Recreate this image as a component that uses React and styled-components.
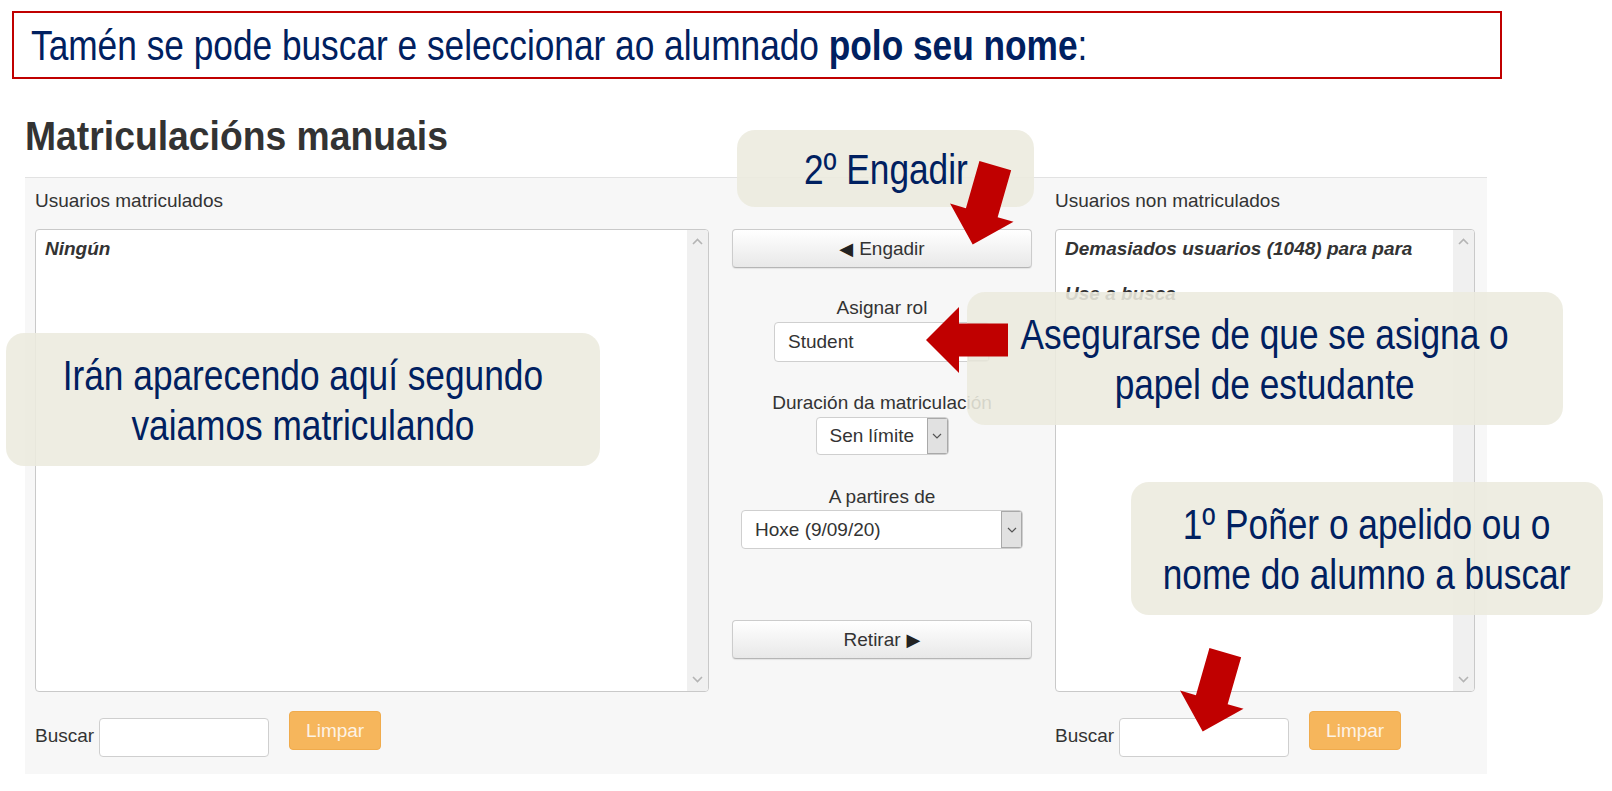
import React from 'react';
import styled, { createGlobalStyle } from 'styled-components';

const GlobalStyle = createGlobalStyle`
  html, body {
    margin: 0;
    padding: 0;
    background: #fff;
  }
  body {
    font-family: "Liberation Sans", Arial, sans-serif;
  }
`;

// no Arial Narrow in the sandbox, so squeeze Liberation Sans to the same width
const Narrow = styled.span`
  display: inline-block;
  white-space: nowrap;
  transform: scaleX(0.82);
  transform-origin: ${(p) => p.$origin || 'center'};
`;

const Page = styled.div`
  position: relative;
  width: 1612px;
  height: 791px;
  overflow: hidden;
  background: #fff;
`;

const Banner = styled.div`
  margin: 11px 0 0 12px;
  width: 1490px;
  height: 68px;
  box-sizing: border-box;
  border: 2px solid #c00000;
  padding-left: 17px;
  display: flex;
  align-items: center;
  font-size: 43px;
  color: #002060;
  white-space: nowrap;

  b {
    font-weight: bold;
  }
`;

const Content = styled.div`
  padding-left: 25px;
`;

const Heading = styled.h2`
  margin: 35px 0 19px;
  font-size: 41px;
  line-height: 44px;
  font-weight: bold;
  color: #333;
  white-space: nowrap;
  transform: scaleX(0.91);
  transform-origin: left;
`;

const Panel = styled.div`
  width: 1462px;
  height: 597px;
  box-sizing: border-box;
  background: #f7f7f7;
  border-top: 1px solid #e2e2e2;
  padding: 11px 12px 0 10px;
  display: grid;
  grid-template-columns: 674px 300px 420px;
  grid-template-rows: auto auto auto;
  align-content: start;
  column-gap: 23px;
  align-items: start;
  font-size: 19px;
  color: #333;
`;

const ListLabel = styled.div`
  line-height: 24px;
  margin-bottom: 16px;
  grid-column: ${(p) => p.$col};
  grid-row: 1;
`;

const ListBox = styled.div`
  grid-column: ${(p) => p.$col};
  grid-row: 2;
  height: 463px;
  box-sizing: border-box;
  background: #fff;
  border: 1px solid #c9c9c9;
  border-radius: 4px;
  display: flex;
  overflow: hidden;
`;

const ListItems = styled.div`
  flex: 1;
  padding: 7px 9px;
`;

const ListItem = styled.div`
  font-weight: bold;
  font-style: italic;
  line-height: 24px;
  margin-bottom: 21px;
  color: #333;
`;

const ScrollTrack = styled.div`
  width: 21px;
  background: #f0f0f0;
  display: flex;
  flex-direction: column;
  justify-content: space-between;
  align-items: center;
  padding: 8px 0;
`;

const Chevron = ({ down }) => (
  <svg width="11" height="7" viewBox="0 0 11 7">
    <path
      d={down ? 'M1 1 L5.5 5.5 L10 1' : 'M1 6 L5.5 1.5 L10 6'}
      fill="none"
      stroke="#b4b4b4"
      strokeWidth="1.6"
    />
  </svg>
);

const Scrollbar = () => (
  <ScrollTrack>
    <Chevron />
    <Chevron down />
  </ScrollTrack>
);

const Middle = styled.div`
  grid-column: 2;
  grid-row: 2;
  display: flex;
  flex-direction: column;
  align-items: center;
`;

const Button = styled.div`
  width: 100%;
  height: 39px;
  box-sizing: border-box;
  margin-top: ${(p) => p.$top || 0}px;
  display: flex;
  align-items: center;
  justify-content: center;
  gap: 6px;
  background: linear-gradient(#ffffff, #e8e8e8);
  border: 1px solid #cccccc;
  border-bottom-color: #b5b5b5;
  border-radius: 4px;
  box-shadow: 0 1px 1px rgba(0, 0, 0, 0.08);
  color: #333;
`;

const Tri = styled.span`
  font-family: "DejaVu Sans", sans-serif;
  font-size: 18px;
  line-height: 1;
  color: #222;
`;

const FieldLabel = styled.div`
  line-height: 24px;
  margin-top: ${(p) => p.$top}px;
  text-align: center;
  white-space: nowrap;
`;

const Select = styled.div`
  width: ${(p) => p.$width}px;
  height: ${(p) => p.$height}px;
  margin-top: ${(p) => p.$top}px;
  box-sizing: border-box;
  display: flex;
  align-items: stretch;
  background: #fff;
  border: 1px solid #cfcfcf;
  border-radius: 4px;
  overflow: hidden;
`;

const SelectValue = styled.div`
  flex: 1;
  display: flex;
  align-items: center;
  padding-left: 13px;
  white-space: nowrap;
`;

const SelectArrow = styled.div`
  width: 21px;
  box-sizing: border-box;
  background: #e1e1e1;
  border: 1px solid #a9a9a9;
  display: flex;
  align-items: center;
  justify-content: center;
`;

const SmallChevron = () => (
  <svg width="10" height="6" viewBox="0 0 10 6">
    <path d="M1 1 L5 5 L9 1" fill="none" stroke="#555" strokeWidth="1.2" />
  </svg>
);

const SearchRow = styled.div`
  grid-column: ${(p) => p.$col};
  grid-row: 3;
  margin-top: 19px;
  display: flex;
  align-items: flex-start;
`;

const SearchLabel = styled.div`
  line-height: 39px;
  margin-top: 5px;
`;

const SearchInput = styled.div`
  width: 170px;
  height: 39px;
  box-sizing: border-box;
  margin: 7px 0 0 5px;
  background: #fff;
  border: 1px solid #cfcfcf;
  border-radius: 4px;
`;

const ClearButton = styled.div`
  width: 92px;
  height: 39px;
  box-sizing: border-box;
  margin-left: 20px;
  display: flex;
  align-items: center;
  justify-content: center;
  background: #f6b65c;
  border: 1px solid #f0ab4c;
  border-radius: 4px;
  color: #fdf3e6;
`;

const Callout = styled.div`
  position: absolute;
  left: ${(p) => p.$x}px;
  top: ${(p) => p.$y}px;
  width: ${(p) => p.$w}px;
  height: ${(p) => p.$h}px;
  box-sizing: border-box;
  display: flex;
  align-items: center;
  justify-content: center;
  text-align: center;
  background: rgba(236, 234, 222, 0.88);
  border-radius: 18px;
  font-size: 43px;
  line-height: 50px;
  color: #002060;
`;

const ArrowSvg = styled.svg`
  position: absolute;
  left: ${(p) => p.$cx - 50}px;
  top: ${(p) => p.$cy - 50}px;
  overflow: visible;
`;

const Arrow = ({ cx, cy, angle }) => (
  <ArrowSvg $cx={cx} $cy={cy} width="100" height="100" viewBox="-50 -50 100 100">
    <path
      d="M -16.5 -41 L 16.5 -41 L 16.5 8 L 33 8 L 0 41 L -33 8 L -16.5 8 Z"
      fill="#c00000"
      transform={`rotate(${angle})`}
    />
  </ArrowSvg>
);

const Search = ({ col }) => (
  <SearchRow $col={col}>
    <SearchLabel>Buscar</SearchLabel>
    <SearchInput />
    <ClearButton>Limpar</ClearButton>
  </SearchRow>
);

const App = () => {
  return (
    <Page>
      <GlobalStyle />
      <Banner>
        <Narrow $origin="left">
          Tamén se pode buscar e seleccionar ao alumnado <b>polo seu nome</b>:
        </Narrow>
      </Banner>

      <Content>
        <Heading>Matriculacións manuais</Heading>
        <Panel>
          <ListLabel $col={1}>Usuarios matriculados</ListLabel>
          <ListLabel $col={3}>Usuarios non matriculados</ListLabel>

          <ListBox $col={1}>
            <ListItems>
              <ListItem>Ningún</ListItem>
            </ListItems>
            <Scrollbar />
          </ListBox>

          <Middle>
            <Button>
              <Tri>◀</Tri>Engadir
            </Button>

            <FieldLabel $top={28}>Asignar rol</FieldLabel>
            <Select $width={216} $height={40} $top={2}>
              <SelectValue>Student</SelectValue>
              <SelectArrow>
                <SmallChevron />
              </SelectArrow>
            </Select>

            <FieldLabel $top={29}>Duración da matriculación</FieldLabel>
            <Select $width={133} $height={38} $top={2}>
              <SelectValue>Sen límite</SelectValue>
              <SelectArrow>
                <SmallChevron />
              </SelectArrow>
            </Select>

            <FieldLabel $top={30}>A partires de</FieldLabel>
            <Select $width={282} $height={39} $top={1}>
              <SelectValue>Hoxe (9/09/20)</SelectValue>
              <SelectArrow>
                <SmallChevron />
              </SelectArrow>
            </Select>

            <Button $top={71}>
              Retirar<Tri>▶</Tri>
            </Button>
          </Middle>

          <ListBox $col={3}>
            <ListItems>
              <ListItem>Demasiados usuarios (1048) para para</ListItem>
              <ListItem>Use a busca</ListItem>
            </ListItems>
            <Scrollbar />
          </ListBox>

          <Search col={1} />
          <Search col={3} />
        </Panel>
      </Content>

      <Callout $x={737} $y={130} $w={297} $h={77}>
        <Narrow>2º Engadir</Narrow>
      </Callout>
      <Callout $x={6} $y={333} $w={594} $h={133}>
        <Narrow>
          Irán aparecendo aquí segundo
          <br />
          vaiamos matriculando
        </Narrow>
      </Callout>
      <Callout $x={967} $y={292} $w={596} $h={133}>
        <Narrow>
          Asegurarse de que se asigna o
          <br />
          papel de estudante
        </Narrow>
      </Callout>
      <Callout $x={1131} $y={482} $w={472} $h={133}>
        <Narrow>
          1º Poñer o apelido ou o
          <br />
          nome do alumno a buscar
        </Narrow>
      </Callout>

      <Arrow cx={984} cy={205} angle={16} />
      <Arrow cx={967} cy={340} angle={90} />
      <Arrow cx={1214} cy={692} angle={16} />
    </Page>
  );
};

export default App;
